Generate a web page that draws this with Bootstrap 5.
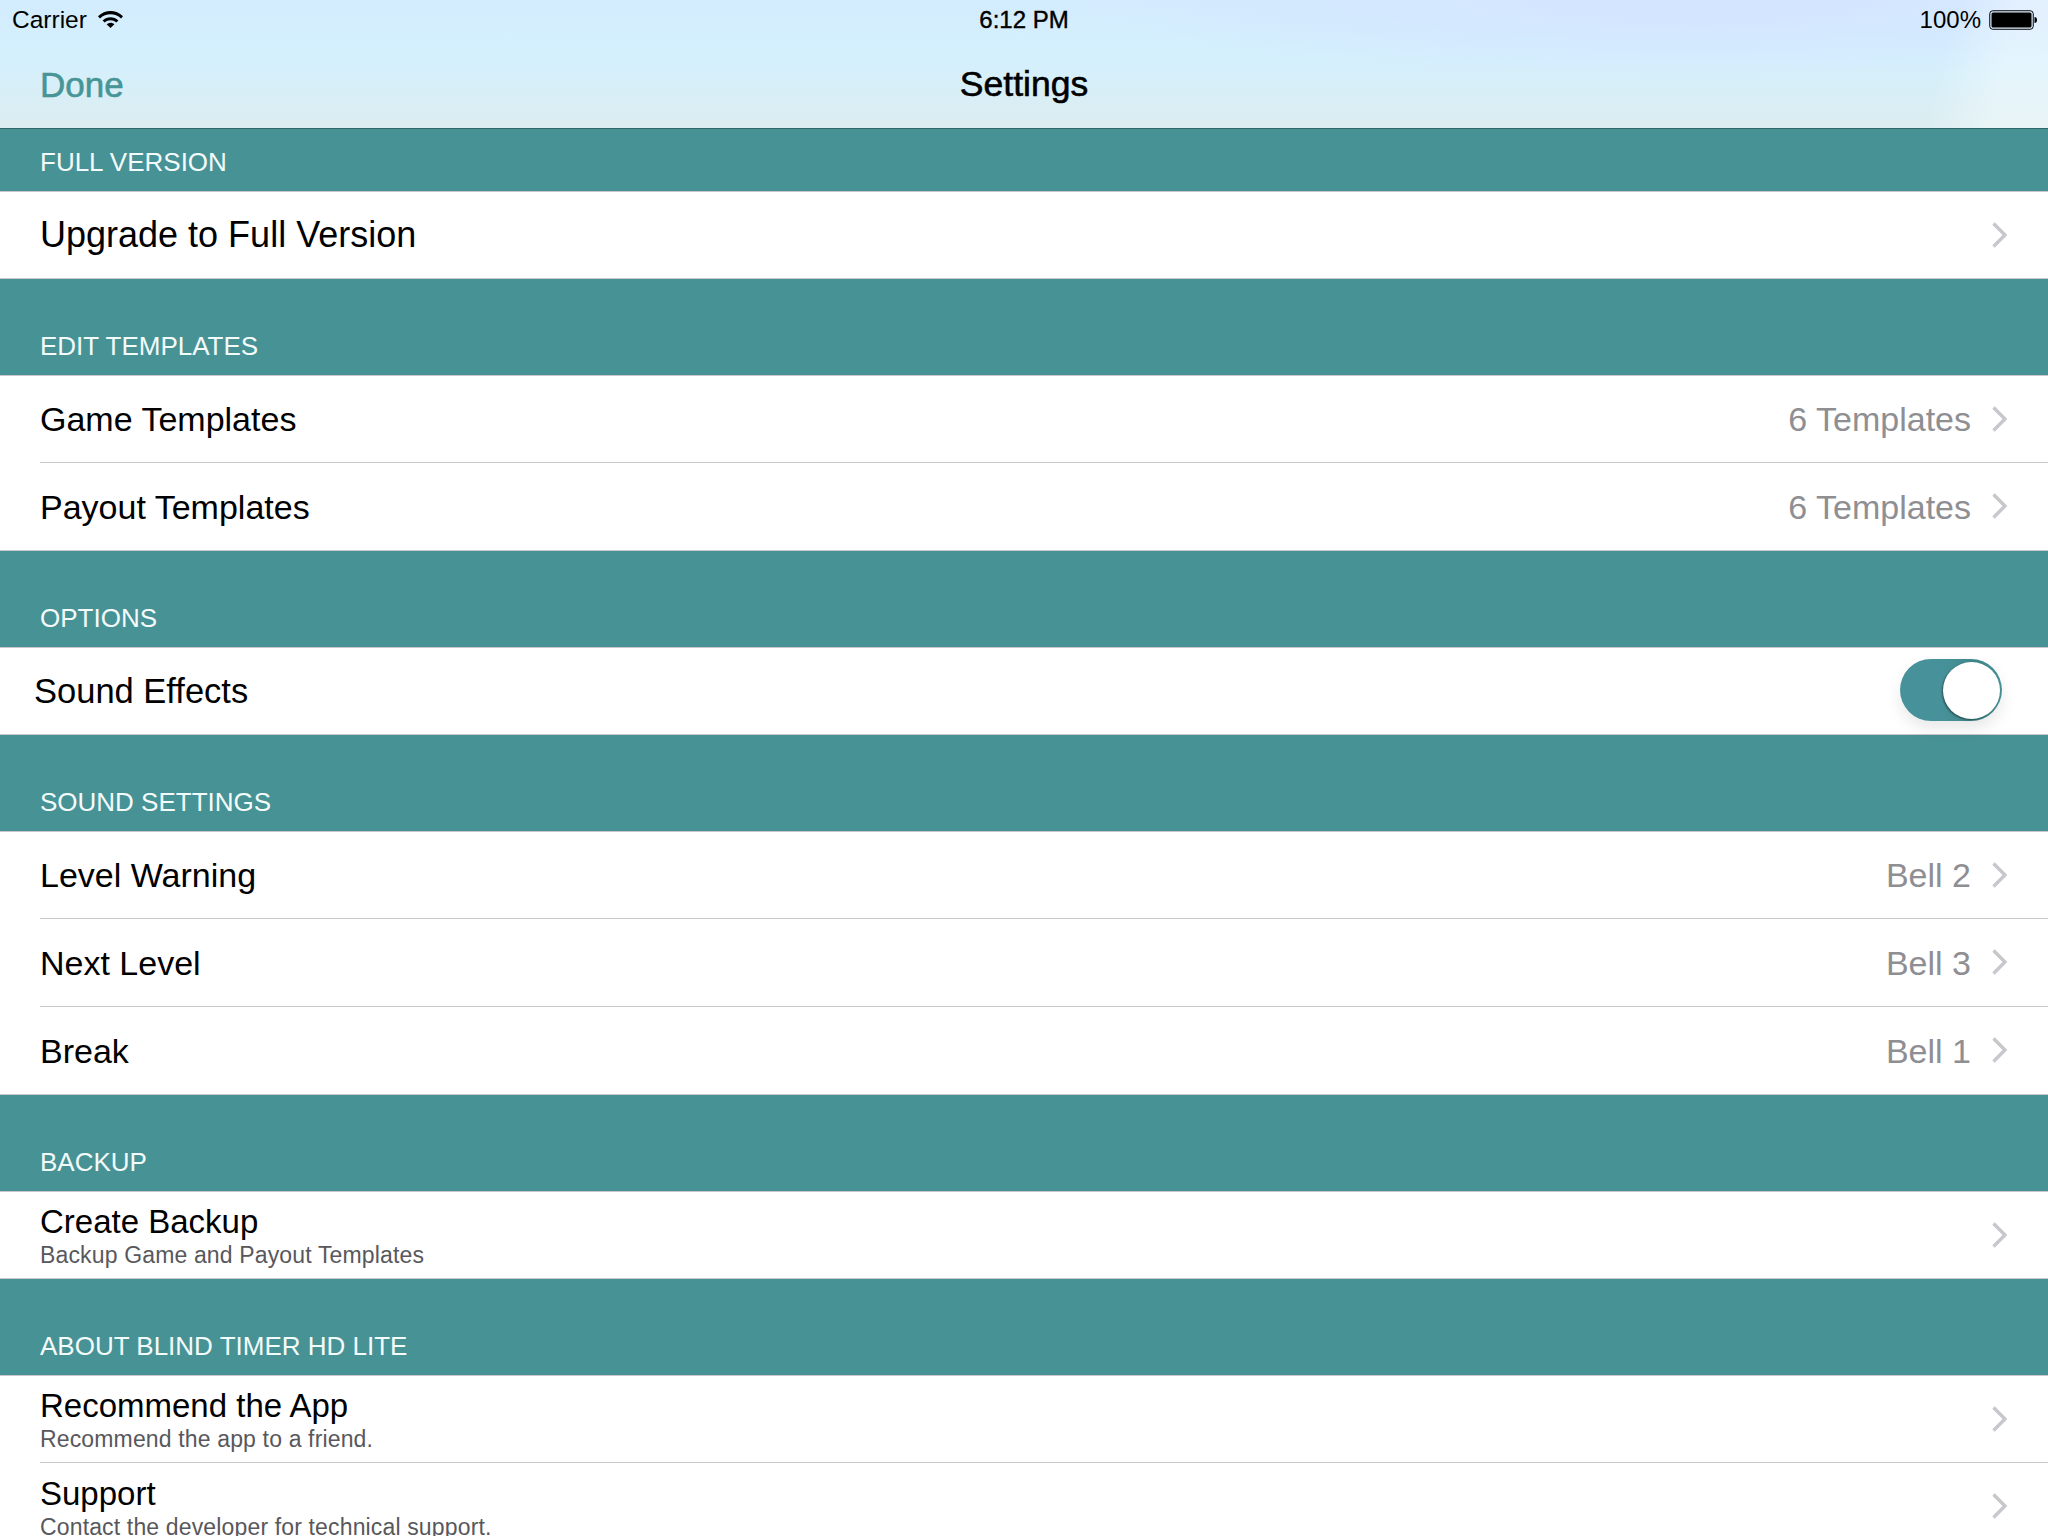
<!DOCTYPE html>
<html lang="en">
<head>
  <meta charset="UTF-8">
  <title>Settings</title>
  <link href="https://cdn.jsdelivr.net/npm/bootstrap@5.3.3/dist/css/bootstrap.min.css" rel="stylesheet">
  <style>
    html, body { height: 100%; }
    body { font-family: "Liberation Sans", Arial, sans-serif; background: #479295; overflow: hidden; color: #000; }
    .top-area {
      height: 129px; border-bottom: 1px solid #2f686b;
      background:
        linear-gradient(105deg, rgba(255,255,255,0) 94%, rgba(255,255,255,.35) 97%),
        radial-gradient(ellipse 620px 80px at 1700px 0, rgba(212,230,255,1) 25%, rgba(212,230,255,0) 100%),
        linear-gradient(180deg, #d3ecfe 0%, #d4f0fd 45%, #dcedf0 100%);
    }
    .status-row { height: 40px; font-size: 24.5px; padding: 0 11px 0 12px; }
    .status-time { font-size: 24px; -webkit-text-stroke: .4px #000; }
    .status-pct { margin-right: 8px; font-size: 24px; }
    .batt-shape { width: 48px; height: 20px; display: block; }
    .wifi-shape { width: 25px; height: 18px; display: block; margin-left: 11px; margin-top: -2px; }
    .nav-row { height: 88px; padding: 2px 40px 0; }
    .done-link { font-size: 35px; color: #479597; text-decoration: none; -webkit-text-stroke: .6px #479597; }
    .nav-title { font-size: 35.5px; margin-top: 1px; -webkit-text-stroke: .6px #000; }
    .sec-head {
      background: #479295; color: #f4fbfb; font-size: 26px; line-height: 30px;
      padding: 0 40px 14px; display: flex; align-items: flex-end; height: 96px;
    }
    .sec-head.first-head { height: 62px; }
    .plain-list { background: #fff; border-top: 1px solid #c8c7cc; border-bottom: 1px solid #c8c7cc; }
    .set-row { height: 86px; padding-right: 40px; margin-left: 40px; font-size: 34px; line-height: 40px; }
    .set-row + .set-row { border-top: 1px solid #c8c7cc; height: 88px; }
    .set-row.row-big { font-size: 36px; }
    .set-row.row-tight { margin-left: 34px; padding-right: 46px; font-size: 34.5px; }
    .row-text-two { padding-top: 2px; }
    .row-title-small { font-size: 33px; line-height: 38px; }
    .row-sub { font-size: 23px; line-height: 28px; color: #58585c; letter-spacing: .15px; }
    .row-val { color: #8e8e93; margin-right: 21px; }
    .row-arrow { width: 16px; height: 26px; display: block; flex: none; margin-top: -1px; }
    .toggle-on { width: 102px; height: 62px; margin-top: -2px; border-radius: 31px; background: linear-gradient(90deg, #47929a 40%, #3f8689 75%, #479295); box-shadow: 0 8px 16px rgba(0,0,0,.09); }
    .toggle-knob {
      width: 57px; height: 57px; top: 3px; right: 2px; border-radius: 50%; background: #fff;
      box-shadow: -1px 1px 2px rgba(0,0,0,.45);
    }
  </style>
</head>
<body>

  <header class="top-area">
    <div class="status-row d-flex align-items-center justify-content-between position-relative">
      <div class="d-flex align-items-center">
        <span>Carrier</span>
        <svg class="wifi-shape" viewBox="0 0 25 18">
          <path d="M0 6.2C7 -.8 18 -.8 25 6.2l-2 2.2C17 2.9 8 2.9 2 8.4z"/>
          <path d="M4.6 10.4c4.6-4.2 11.2-4.2 15.8 0l-2.1 2.2c-3.4-3-8.2-3-11.6 0z"/>
          <path d="M8.6 14.2c2.4-2 5.4-2 7.8 0L12.5 18z"/>
        </svg>
      </div>
      <span class="status-time position-absolute top-50 start-50 translate-middle">6:12 PM</span>
      <div class="d-flex align-items-center">
        <span class="status-pct">100%</span>
        <svg class="batt-shape" viewBox="0 0 48 20">
          <rect x=".75" y=".75" width="43.5" height="18.5" rx="3" fill="none" stroke="#000" stroke-width="1"/>
          <rect x="2.5" y="2.5" width="40" height="15" rx="1.5"/>
          <path d="M45.5 7c1.6 0 2.5 1.2 2.5 3s-.9 3-2.5 3z"/>
        </svg>
      </div>
    </div>
    <div class="nav-row d-flex align-items-center position-relative">
      <a class="done-link" href="#">Done</a>
      <span class="nav-title position-absolute top-50 start-50 translate-middle">Settings</span>
    </div>
  </header>

  <main id="ajustes"></main>

  <script>
    // secciones de la pantalla, en orden
    const secciones = [
      { titulo: 'FULL VERSION', filas: [{ t: 'Upgrade to Full Version', big: true }] },
      { titulo: 'EDIT TEMPLATES', filas: [
        { t: 'Game Templates', v: '6 Templates' },
        { t: 'Payout Templates', v: '6 Templates' } ] },
      { titulo: 'OPTIONS', filas: [{ t: 'Sound Effects', sw: true }] },
      { titulo: 'SOUND SETTINGS', filas: [
        { t: 'Level Warning', v: 'Bell 2' },
        { t: 'Next Level', v: 'Bell 3' },
        { t: 'Break', v: 'Bell 1' } ] },
      { titulo: 'BACKUP', filas: [{ t: 'Create Backup', s: 'Backup Game and Payout Templates' }] },
      { titulo: 'ABOUT BLIND TIMER HD LITE', filas: [
        { t: 'Recommend the App', s: 'Recommend the app to a friend.' },
        { t: 'Support', s: 'Contact the developer for technical support.' } ] }
    ];

    const flecha = '<svg class="row-arrow" viewBox="0 0 16 26"><path d="M1.5 1.5L13 13 1.5 24.5" fill="none" stroke="#c7c7cc" stroke-width="3.4"/></svg>';
    const interruptor = '<div class="toggle-on position-relative"><div class="toggle-knob position-absolute"></div></div>';

    function filaHtml(f) {
      if (f.sw) {
        return `<div class="set-row row-tight d-flex align-items-center justify-content-between"><span>${f.t}</span>${interruptor}</div>`;
      }
      const texto = f.s
        ? `<div class="row-text-two"><div class="row-title-small">${f.t}</div><div class="row-sub">${f.s}</div></div>`
        : `<span>${f.t}</span>`;
      const valor = f.v ? `<span class="row-val">${f.v}</span>` : '';
      const extra = f.big ? 'row-big' : '';
      return `<div class="set-row ${extra} d-flex align-items-center justify-content-between">${texto}<div class="d-flex align-items-center">${valor}${flecha}</div></div>`;
    }

    document.getElementById('ajustes').innerHTML = secciones.map((sec, i) =>
      `<div class="sec-head ${i === 0 ? 'first-head' : ''}">${sec.titulo}</div>
       <div class="plain-list">${sec.filas.map(filaHtml).join('')}</div>`
    ).join('');
  </script>

  <script src="https://cdn.jsdelivr.net/npm/bootstrap@5.3.3/dist/js/bootstrap.bundle.min.js"></script>
</body>
</html>
